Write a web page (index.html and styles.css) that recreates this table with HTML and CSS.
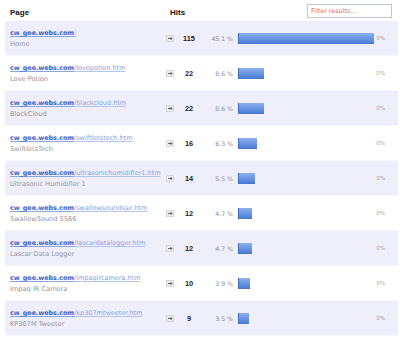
FILE: index.html
```html
<!DOCTYPE html>
<html>
<head>
<meta charset="utf-8">
<link rel="stylesheet" href="styles.css">
</head>
<body>
<div class="report">
  <div class="head">
    <span class="h-page">Page</span>
    <span class="h-hits">Hits</span>
    <input class="filter" type="text" placeholder="Filter results...">
  </div>

  <div class="row alt">
    <div class="page"><a class="link"><span class="dom">cw_gee.webs.com</span><span class="path">/</span></a><div class="title">Home</div></div>
    <div class="ico"><svg width="8" height="7" viewBox="0 0 8 7"><rect x="0.5" y="0.5" width="7" height="6" fill="#eeeeee" stroke="#d8d8d8"/><path d="M2 3.5h4M4.5 2l1.5 1.5-1.5 1.5" stroke="#666" fill="none" stroke-width="1"/></svg></div>
    <div class="hits">115</div>
    <div class="pct">45.1 %</div>
    <div class="barcell"><div class="bar" style="width:136px"></div></div>
    <div class="zero">0%</div>
  </div>

  <div class="row">
    <div class="page"><a class="link"><span class="dom">cw_gee.webs.com</span><span class="path">/lovepotion.htm</span></a><div class="title">Love Potion</div></div>
    <div class="ico"><svg width="8" height="7" viewBox="0 0 8 7"><rect x="0.5" y="0.5" width="7" height="6" fill="#eeeeee" stroke="#d8d8d8"/><path d="M2 3.5h4M4.5 2l1.5 1.5-1.5 1.5" stroke="#666" fill="none" stroke-width="1"/></svg></div>
    <div class="hits">22</div>
    <div class="pct">8.6 %</div>
    <div class="barcell"><div class="bar" style="width:26px"></div></div>
    <div class="zero">0%</div>
  </div>

  <div class="row alt">
    <div class="page"><a class="link"><span class="dom">cw_gee.webs.com</span><span class="path">/blackcloud.htm</span></a><div class="title">BlackCloud</div></div>
    <div class="ico"><svg width="8" height="7" viewBox="0 0 8 7"><rect x="0.5" y="0.5" width="7" height="6" fill="#eeeeee" stroke="#d8d8d8"/><path d="M2 3.5h4M4.5 2l1.5 1.5-1.5 1.5" stroke="#666" fill="none" stroke-width="1"/></svg></div>
    <div class="hits">22</div>
    <div class="pct">8.6 %</div>
    <div class="barcell"><div class="bar" style="width:26px"></div></div>
    <div class="zero">0%</div>
  </div>

  <div class="row">
    <div class="page"><a class="link"><span class="dom">cw_gee.webs.com</span><span class="path">/swiftletstech.htm</span></a><div class="title">SwiftletsTech</div></div>
    <div class="ico"><svg width="8" height="7" viewBox="0 0 8 7"><rect x="0.5" y="0.5" width="7" height="6" fill="#eeeeee" stroke="#d8d8d8"/><path d="M2 3.5h4M4.5 2l1.5 1.5-1.5 1.5" stroke="#666" fill="none" stroke-width="1"/></svg></div>
    <div class="hits">16</div>
    <div class="pct">6.3 %</div>
    <div class="barcell"><div class="bar" style="width:19px"></div></div>
    <div class="zero">0%</div>
  </div>

  <div class="row alt">
    <div class="page"><a class="link"><span class="dom">cw_gee.webs.com</span><span class="path">/ultrasonichumidifier1.htm</span></a><div class="title">Ultrasonic Humidifier 1</div></div>
    <div class="ico"><svg width="8" height="7" viewBox="0 0 8 7"><rect x="0.5" y="0.5" width="7" height="6" fill="#eeeeee" stroke="#d8d8d8"/><path d="M2 3.5h4M4.5 2l1.5 1.5-1.5 1.5" stroke="#666" fill="none" stroke-width="1"/></svg></div>
    <div class="hits">14</div>
    <div class="pct">5.5 %</div>
    <div class="barcell"><div class="bar" style="width:17px"></div></div>
    <div class="zero">0%</div>
  </div>

  <div class="row">
    <div class="page"><a class="link"><span class="dom">cw_gee.webs.com</span><span class="path">/swallowsoundsse.htm</span></a><div class="title">SwallowSound SS66</div></div>
    <div class="ico"><svg width="8" height="7" viewBox="0 0 8 7"><rect x="0.5" y="0.5" width="7" height="6" fill="#eeeeee" stroke="#d8d8d8"/><path d="M2 3.5h4M4.5 2l1.5 1.5-1.5 1.5" stroke="#666" fill="none" stroke-width="1"/></svg></div>
    <div class="hits">12</div>
    <div class="pct">4.7 %</div>
    <div class="barcell"><div class="bar" style="width:14px"></div></div>
    <div class="zero">0%</div>
  </div>

  <div class="row alt">
    <div class="page"><a class="link"><span class="dom">cw_gee.webs.com</span><span class="path">/lascardatalogger.htm</span></a><div class="title">Lascar Data Logger</div></div>
    <div class="ico"><svg width="8" height="7" viewBox="0 0 8 7"><rect x="0.5" y="0.5" width="7" height="6" fill="#eeeeee" stroke="#d8d8d8"/><path d="M2 3.5h4M4.5 2l1.5 1.5-1.5 1.5" stroke="#666" fill="none" stroke-width="1"/></svg></div>
    <div class="hits">12</div>
    <div class="pct">4.7 %</div>
    <div class="barcell"><div class="bar" style="width:14px"></div></div>
    <div class="zero">0%</div>
  </div>

  <div class="row">
    <div class="page"><a class="link"><span class="dom">cw_gee.webs.com</span><span class="path">/impaqircamera.htm</span></a><div class="title">Impaq IR Camera</div></div>
    <div class="ico"><svg width="8" height="7" viewBox="0 0 8 7"><rect x="0.5" y="0.5" width="7" height="6" fill="#eeeeee" stroke="#d8d8d8"/><path d="M2 3.5h4M4.5 2l1.5 1.5-1.5 1.5" stroke="#666" fill="none" stroke-width="1"/></svg></div>
    <div class="hits">10</div>
    <div class="pct">3.9 %</div>
    <div class="barcell"><div class="bar" style="width:12px"></div></div>
    <div class="zero">0%</div>
  </div>

  <div class="row alt">
    <div class="page"><a class="link"><span class="dom">cw_gee.webs.com</span><span class="path">/kp307mtweeter.htm</span></a><div class="title">KP307M Tweeter</div></div>
    <div class="ico"><svg width="8" height="7" viewBox="0 0 8 7"><rect x="0.5" y="0.5" width="7" height="6" fill="#eeeeee" stroke="#d8d8d8"/><path d="M2 3.5h4M4.5 2l1.5 1.5-1.5 1.5" stroke="#666" fill="none" stroke-width="1"/></svg></div>
    <div class="hits">9</div>
    <div class="pct">3.5 %</div>
    <div class="barcell"><div class="bar" style="width:11px"></div></div>
    <div class="zero">0%</div>
  </div>
</div>
</body>
</html>
```
FILE: styles.css
```css
html, body {
  margin: 0;
  padding: 0;
  background: #ffffff;
}
.report {
  padding: 0 2px 0 5px;
  font-family: "DejaVu Sans", Verdana, sans-serif;
}
.head {
  height: 21px;
  display: grid;
  grid-template-columns: 160px 1fr auto;
  align-items: center;
  padding-left: 5px;
  padding-right: 6px;
}
.h-page, .h-hits {
  font-family: "Liberation Sans", Arial, sans-serif;
  font-weight: bold;
  font-size: 8px;
  color: #111;
  padding-top: 4px;
}
.filter {
  box-sizing: border-box;
  width: 85px;
  height: 14px;
  margin: 0;
  padding: 0 3px;
  border: 1px solid #bcc6d6;
  background: #fff;
  font-family: "DejaVu Sans", sans-serif;
  font-size: 6.4px;
  outline: none;
}
.filter::placeholder {
  color: #e86666;
}
.row {
  height: 35px;
  display: grid;
  grid-template-columns: 156px 9px 28px 30px 141px 11px;
  align-items: center;
  padding-left: 5px;
  box-sizing: border-box;
  border-bottom: 1px solid #f6f6fb;
}
.row.alt {
  background: #efeffc;
}
.page {
  align-self: start;
  padding-top: 7px;
}
.link {
  display: block;
  line-height: 10px;
  font-size: 6.5px;
  text-decoration: none;
  white-space: nowrap;
}
.dom, .path {
  text-decoration-line: underline;
  text-decoration-thickness: 1px;
  text-underline-offset: 1px;
}
.dom {
  color: #3a62c6;
  font-weight: bold;
  letter-spacing: -0.1px;
  text-decoration-color: #8aa4dc;
}
.path {
  color: #86a2e0;
  text-decoration-color: #b3c5ec;
}
.title {
  margin-top: 1px;
  line-height: 11px;
  font-size: 6.6px;
  color: #949494;
  white-space: nowrap;
}
.ico {
  display: flex;
  align-items: center;
}
.ico svg {
  display: block;
}
.hits {
  text-align: center;
  font-family: "Liberation Sans", Arial, sans-serif;
  font-weight: bold;
  font-size: 7.4px;
  color: #222;
}
.pct {
  text-align: right;
  font-size: 6.2px;
  color: #8c8c8c;
}
.barcell {
  padding-left: 5px;
  display: flex;
  align-items: center;
}
.bar {
  height: 11px;
  box-sizing: border-box;
  background: linear-gradient(#8db0ee, #4c7fd9);
  border-left: 1px solid #3f6cc6;
  border-bottom: 1px solid #4a78cc;
}
.zero {
  text-align: right;
  font-size: 5.6px;
  color: #aaaaaa;
}
```
